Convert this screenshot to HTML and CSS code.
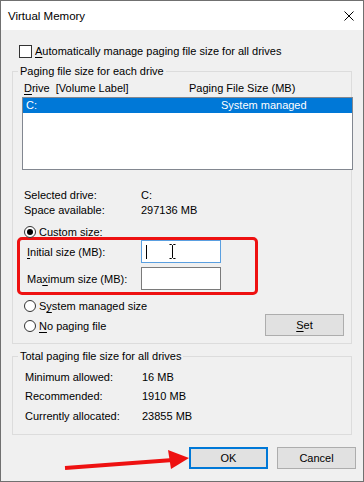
FILE: index.html
```html
<!DOCTYPE html>
<html lang="en">
<head>
  <meta charset="UTF-8" />
  <title>Virtual Memory</title>
  <link rel="stylesheet" href="styles.css">
</head>
<body>
  <div class="dialog">
    <div class="titlebar">
      <span class="title">Virtual Memory</span>
      <svg class="close" width="10" height="10" viewBox="0 0 10 10">
        <path d="M0.5 0.5 L9.5 9.5 M9.5 0.5 L0.5 9.5" stroke="#000" stroke-width="1" fill="none" />
      </svg>
    </div>

    <div class="content">
      <!-- Automatic checkbox -->
      <div class="check-row">
        <span class="checkbox"></span>
        <span><u>A</u>utomatically manage paging file size for all drives</span>
      </div>

      <!-- Per drive group -->
      <fieldset class="group drives">
        <legend>Paging file size for each drive</legend>
        <div class="list-head">
          <span class="col-drive"><u>D</u>rive&nbsp; [Volume Label]</span>
          <span>Paging File Size (MB)</span>
        </div>
        <div class="listbox">
          <div class="list-row selected">
            <span class="col-size">C:</span>
            <span>System managed</span>
          </div>
        </div>

        <div class="info">
          <span>Selected drive:</span><span>C:</span>
          <span>Space available:</span><span>297136 MB</span>
        </div>

        <div class="radio-row custom"><span class="radio checked"></span><span>Custom size:</span></div>

        <div class="highlight">
          <div class="field-row">
            <span class="field-label"><u>I</u>nitial size (MB):</span>
            <span class="input focused">
              <span class="caret"></span>
              <svg class="ibeam" width="7" height="15" viewBox="0 0 7 15">
                <path d="M0.5 0.5 H2.5 L3.5 1.5 L4.5 0.5 H6.5 M3.5 1.5 V13.5 M0.5 14.5 H2.5 L3.5 13.5 L4.5 14.5 H6.5" stroke="#000" stroke-width="1" fill="none" />
              </svg>
            </span>
          </div>
          <div class="field-row">
            <span class="field-label">Ma<u>x</u>imum size (MB):</span>
            <span class="input"></span>
          </div>
        </div>

        <div class="radio-set">
          <div class="radios">
            <div class="radio-row"><span class="radio"></span><span>S<u>y</u>stem managed size</span></div>
            <div class="radio-row"><span class="radio"></span><span><u>N</u>o paging file</span></div>
          </div>
          <button class="btn set"><u>S</u>et</button>
        </div>
      </fieldset>

      <!-- Totals group -->
      <fieldset class="group totals">
        <legend>Total paging file size for all drives</legend>
        <div class="totals-grid">
          <span>Minimum allowed:</span><span>16 MB</span>
          <span>Recommended:</span><span>1910 MB</span>
          <span>Currently allocated:</span><span>23855 MB</span>
        </div>
      </fieldset>

      <div class="actions">
        <button class="btn default">OK</button>
        <button class="btn">Cancel</button>
      </div>
    </div>

    <!-- annotation arrow -->
    <svg class="arrow" width="364" height="482" viewBox="0 0 364 482">
      <path d="M65 468 L173 460" stroke="#ee1111" stroke-width="4" fill="none" />
      <path d="M189 458 L168 450 L171 469 Z" fill="#ee1111" />
    </svg>
  </div>
</body>
</html>
```

FILE: styles.css
```css
*            {box-sizing:border-box;}
body         {margin:0; font-family:"Liberation Sans", Arial, sans-serif; font-size:11px; color:#000;}
u            {text-decoration-thickness:1px; text-underline-offset:2px;}

.dialog      {position:relative; width:364px; height:482px; border:1px solid #707070; background:#f0f0f0;}
.titlebar    {height:29px; background:#fff; display:flex; align-items:center; justify-content:space-between; padding:0 9px 0 7px;}
.title       {font-size:11.5px;}
.content     {padding:0 11px;}

.check-row   {display:flex; align-items:center; gap:3px; line-height:16px; margin:13px 0 0 7px;}
.checkbox    {width:13px; height:13px; border:1px solid #333; background:#fff;}

.group       {margin:4px 0 0; padding:0 0 7px 9px; border:1px solid #dcdcdc; min-width:0;}
.group legend {padding:0 2px; margin-left:-4px; line-height:16px;}

.list-head   {display:flex; line-height:16px; margin:1px 0 1px 2px;}
.col-drive   {width:165px;}
.listbox     {height:73px; margin-right:-2px; border:1px solid #828790; background:#fff;}
.list-row    {display:flex; line-height:15px; padding-left:3px;}
.list-row.selected {background:#0078d7; color:#fff;}
.col-size    {width:195px;}

.info        {display:grid; grid-template-columns:117px auto; line-height:15px; margin:18px 0 0 2px;}

.radio-row   {display:flex; align-items:center; gap:3px; line-height:16px; margin-left:2px;}
.radio       {width:12px; height:12px; border:1px solid #333; border-radius:50%; background:#fff; display:flex; align-items:center; justify-content:center;}
.radio.checked::after {content:""; width:6px; height:6px; border-radius:50%; background:#000;}
.custom      {margin-top:6px;}

.highlight   {width:241px; margin:-3px 0 0 -5px; padding:0 0 2px 7px; border:3px solid #ee1111; border-radius:5px; display:flex; flex-direction:column; gap:4px;}
.field-row   {display:flex; align-items:center;}
.field-label {width:114px;}
.input       {width:80px; height:23px; border:1px solid #7a7a7a; background:#fff; display:flex; align-items:center; padding-left:4px;}
.input.focused {border-color:#5a9fe0;}
.caret       {width:1px; height:14px; background:#000;}
.ibeam       {margin-left:22px;}

.radio-set   {display:flex; align-items:flex-start; margin-top:3px;}
.radios      {display:flex; flex-direction:column; gap:4px;}
.btn         {width:79px; height:22px; padding:0; border:1px solid #adadad; background:#e1e1e1; font:inherit; color:#000;}
.set         {margin:16px 7px 0 auto;}

.totals      {margin-top:4px; padding-bottom:8px;}
.totals-grid {display:grid; grid-template-columns:117px auto; grid-auto-rows:19.5px; align-items:center; margin:3px 0 0 3px;}

.actions     {display:flex; justify-content:flex-end; gap:9px; margin:12px -4px 0 0;}
.btn.default {border-color:#0078d7; box-shadow:inset 0 0 0 1px #0078d7;}

.arrow       {position:absolute; left:-1px; top:-1px; pointer-events:none;}
```
